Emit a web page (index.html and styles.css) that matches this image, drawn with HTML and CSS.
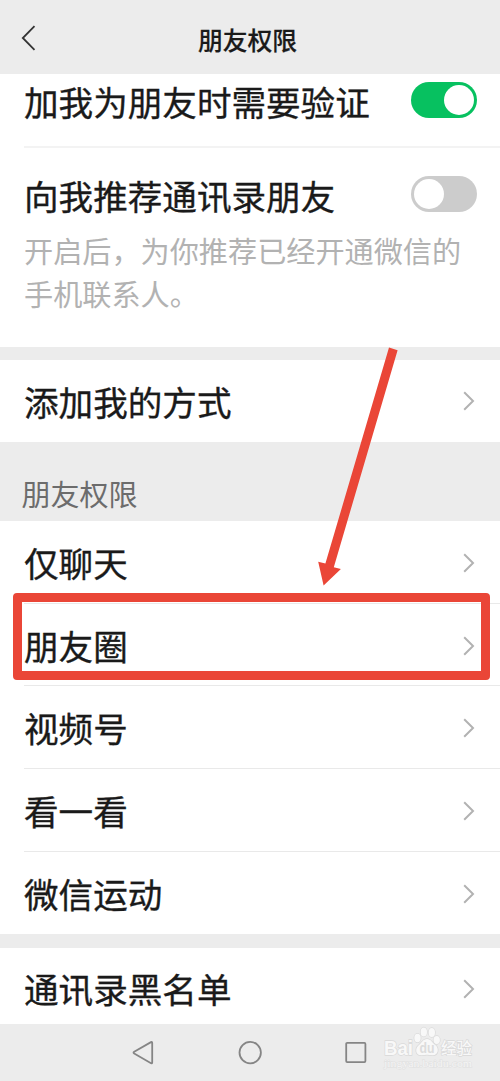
FILE: index.html
```html
<!DOCTYPE html>
<html lang="zh-CN">
<head>
  <meta charset="UTF-8">
  <meta name="viewport" content="width=device-width, initial-scale=1.0">
  <title>朋友权限</title>
  <link rel="stylesheet" href="styles.css">
</head>
<body>
  <header class="header">
    <svg class="back" width="18" height="28" viewBox="0 0 18 28"><path d="M14.5 2.2 2.8 14 14.5 25.8"/></svg>
    <h1>朋友权限</h1>
  </header>

  <main>
    <div class="group">
      <div class="row verify">
        <span class="label">加我为朋友时需要验证</span>
        <span class="switch on"></span>
      </div>
      <div class="recommend">
        <div class="row">
          <span class="label">向我推荐通讯录朋友</span>
          <span class="switch"></span>
        </div>
        <p class="desc">开启后，为你推荐已经开通微信的手机联系人。</p>
      </div>
    </div>

    <div class="group add">
      <div class="row">
        <span class="label">添加我的方式</span>
        <svg class="arrow" width="12" height="20" viewBox="0 0 12 20"><path d="M1.2 1.3 10 10 1.2 18.7"/></svg>
      </div>
    </div>

    <h2 class="section-title">朋友权限</h2>
    <div class="group list">
      <div class="row">
        <span class="label">仅聊天</span>
        <svg class="arrow" width="12" height="20" viewBox="0 0 12 20"><path d="M1.2 1.3 10 10 1.2 18.7"/></svg>
      </div>
      <div class="row">
        <span class="label">朋友圈</span>
        <svg class="arrow" width="12" height="20" viewBox="0 0 12 20"><path d="M1.2 1.3 10 10 1.2 18.7"/></svg>
      </div>
      <div class="row">
        <span class="label">视频号</span>
        <svg class="arrow" width="12" height="20" viewBox="0 0 12 20"><path d="M1.2 1.3 10 10 1.2 18.7"/></svg>
      </div>
      <div class="row">
        <span class="label">看一看</span>
        <svg class="arrow" width="12" height="20" viewBox="0 0 12 20"><path d="M1.2 1.3 10 10 1.2 18.7"/></svg>
      </div>
      <div class="row">
        <span class="label">微信运动</span>
        <svg class="arrow" width="12" height="20" viewBox="0 0 12 20"><path d="M1.2 1.3 10 10 1.2 18.7"/></svg>
      </div>
    </div>

    <div class="group blacklist">
      <div class="row">
        <span class="label">通讯录黑名单</span>
        <svg class="arrow" width="12" height="20" viewBox="0 0 12 20"><path d="M1.2 1.3 10 10 1.2 18.7"/></svg>
      </div>
    </div>
  </main>

  <nav class="navbar">
    <svg width="24" height="26" viewBox="0 0 24 26"><path d="M19 2.1 2.2 11.7Q.8 12.6 2.2 13.5L19 23.2Q20.2 23.6 20.2 22.4V2.9Q20.2 1.6 19 2.1Z"/></svg>
    <svg width="24" height="26" viewBox="0 0 24 26"><circle cx="12.2" cy="12.6" r="10.7"/></svg>
    <svg width="24" height="26" viewBox="0 0 24 26"><rect x="2.2" y="2.9" width="19.2" height="19.2" rx="1"/></svg>
  </nav>

  <!-- 水印 -->
  <svg class="watermark" width="100" height="48" viewBox="0 0 100 48">
    <g class="mark">
      <text class="brand" x="4" y="28.5" textLength="29" lengthAdjust="spacingAndGlyphs">Bai</text>
      <ellipse cx="37.5" cy="12" rx="3.2" ry="4.2"/>
      <ellipse cx="43.8" cy="6" rx="3.2" ry="4.5"/>
      <ellipse cx="51.8" cy="6.5" rx="3.2" ry="4.5"/>
      <ellipse cx="56.7" cy="14" rx="3.2" ry="4"/>
      <path d="M47 13C51 13 52.5 17 55 18.8 59.5 22 58.5 29.5 52.5 29.3Q47 28.3 41.5 29.3C35.5 29.5 34.5 22.5 39 19 41.5 17 43 13 47 13Z"/>
      <text class="du" x="39.5" y="27" textLength="15" lengthAdjust="spacingAndGlyphs">du</text>
      <text class="jingyan" x="61" y="27.5" textLength="31" lengthAdjust="spacingAndGlyphs">经验</text>
      <text class="url" x="4" y="40.5" textLength="88" lengthAdjust="spacingAndGlyphs">jingyan.baidu.com</text>
    </g>
  </svg>

  <!-- 标注：红框和箭头 -->
  <svg class="arrow-mark" width="90" height="250" viewBox="0 0 90 250">
    <path d="M76 3.6 84.6 6.2 20.8 223.2 27.9 225 10.6 241.5 5.2 217.8 12.4 219.6Z"/>
  </svg>
  <div class="highlight"></div>
</body>
</html>
```
FILE: styles.css
```css
* {
  box-sizing: border-box;
}
body {
  position: relative;
  margin: 0;
  height: 1081px;
  overflow: hidden;
  display: flex;
  flex-direction: column;
  background: #ececec;
  color: #1a1a1a;
  font-family: "Noto Sans CJK SC", sans-serif;
}
h1, h2, p {
  margin: 0;
}
.header {
  display: grid;
  grid-template-columns: 60px 1fr 60px;
  align-items: center;
  height: 74px;
  padding-bottom: 1px;
}
.header h1 {
  grid-column: 2;
  padding: 5px 5px 0 0;
  font-size: 24.8px;
  font-weight: 500;
  line-height: 36px;
  text-align: center;
  -webkit-text-stroke: 0.2px #1a1a1a;
}
.back {
  margin: 3px 0 0 20px;
  fill: none;
  stroke: #333;
  stroke-width: 1.8;
}
.group {
  background: #fff;
}
.row {
  display: flex;
  align-items: center;
  justify-content: space-between;
  padding-right: 25px;
}
.label {
  font-size: 34.6px;
  line-height: 46px;
  white-space: nowrap;
  -webkit-text-stroke: 0.35px #1a1a1a;
}
.verify {
  height: 74px;
  margin-left: 24px;
  padding-right: 23px;
  padding-bottom: 20px;
  border-bottom: 2px solid #f3f3f3;
}
.verify .label,
.recommend .label {
  padding-top: 2px;
}
.recommend {
  height: 199px;
  padding: 22px 0 0 24px;
}
.recommend .row {
  padding-right: 23px;
}
.switch {
  width: 66px;
  height: 36px;
  padding: 3px;
  border-radius: 18px;
  background: #ccc;
}
.switch::before {
  content: "";
  display: block;
  width: 30px;
  height: 30px;
  border-radius: 50%;
  background: #fff;
}
.switch.on {
  background: #07c160;
}
.switch.on::before {
  margin-left: auto;
}
.desc {
  width: 440px;
  padding-top: 11px;
  font-size: 29.15px;
  line-height: 42.5px;
  color: #b2b2b2;
}
.add {
  height: 82px;
  margin-top: 13px;
  padding-left: 24px;
}
.add .row {
  height: 82px;
}
.add .label,
.blacklist .label {
  padding-bottom: 1px;
}
.arrow {
  fill: none;
  stroke: #b2b2b2;
  stroke-width: 2;
}
.list .arrow {
  margin-top: 2px;
}
.section-title {
  height: 79px;
  padding: 30px 0 0 21.5px;
  font-size: 29px;
  font-weight: 400;
  line-height: 42px;
  color: #6c6c6c;
}
.list {
  padding-left: 24px;
}
.list .row {
  height: 82.7px;
  border-bottom: 1px solid #e9e9e9;
}
.list .row:last-child {
  border-bottom: none;
}
.blacklist {
  height: 76px;
  margin-top: 13.5px;
  padding-left: 24px;
}
.blacklist .row {
  height: 82px;
}
.navbar {
  display: flex;
  justify-content: center;
  gap: 82px;
  height: 57px;
  padding-top: 16px;
  background: #ececec;
}
.navbar svg {
  fill: none;
  stroke: #858585;
  stroke-width: 1.8;
}
.highlight {
  position: absolute;
  left: 13px;
  top: 593px;
  width: 477px;
  height: 87px;
  border: 9px solid #ea4637;
  border-radius: 4px;
}
.arrow-mark {
  position: absolute;
  left: 313px;
  top: 344px;
  fill: #ea4637;
}
.watermark {
  position: absolute;
  left: 380px;
  top: 1026px;
}
.mark {
  fill: #f8f8f8;
  stroke: #d9d9d9;
  stroke-width: 1.4;
  paint-order: stroke;
}
.brand,
.du {
  font-family: "Liberation Sans", Arial, sans-serif;
  font-size: 20px;
  font-weight: bold;
}
.du {
  font-size: 15px;
  fill: #dcdcdc;
  stroke: none;
}
.jingyan {
  font-size: 16px;
  font-weight: 500;
}
.url {
  font-family: "Liberation Serif", serif;
  font-size: 11px;
  fill: #f5f5f5;
  stroke: #dfdfdf;
  stroke-width: 0.9;
}
```
